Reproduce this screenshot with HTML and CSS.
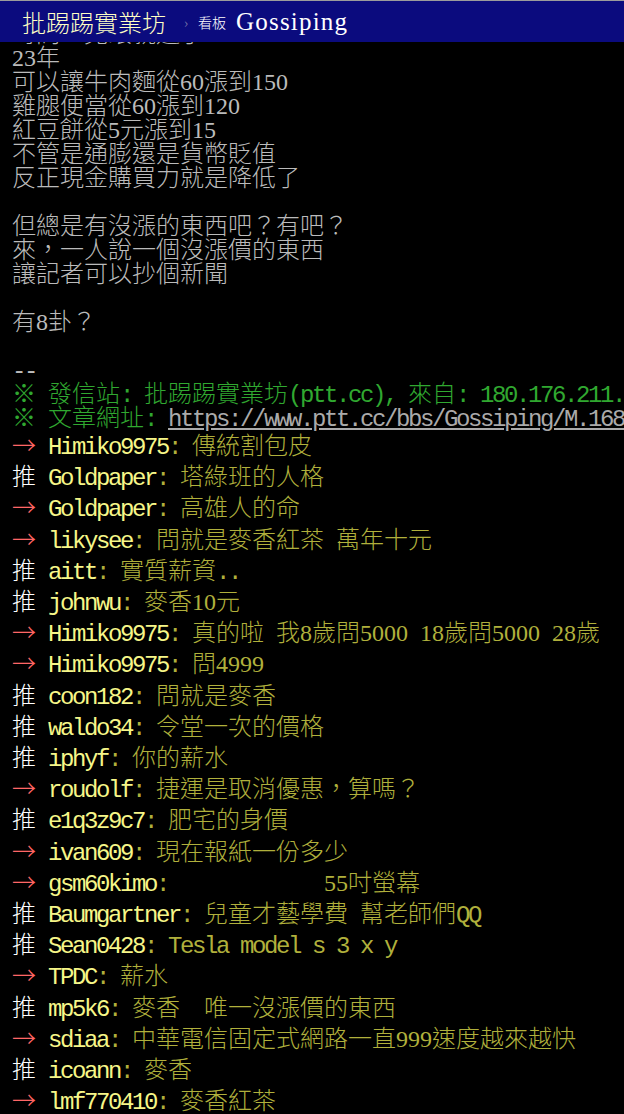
FILE: index.html
```html
<!DOCTYPE html>
<html lang="zh-Hant">
<head>
<meta charset="utf-8">
<title>批踢踢實業坊 › 看板 Gossiping</title>
<link rel="stylesheet" href="styles.css">
</head>
<body>
<div class="topbar">
  <span class="logo">批踢踢實業坊</span>
  <span class="sep">›</span>
  <span class="board-label">看板</span>
  <span class="board">Gossiping</span>
</div>
<div class="main">時間一晃眼就過了<span class="a"> </span><span class="n">20</span>
<span class="n">23</span>年
可以讓牛肉麵從<span class="n">60</span>漲到<span class="n">150</span>
雞腿便當從<span class="n">60</span>漲到<span class="n">120</span>
紅豆餅從<span class="n">5</span>元漲到<span class="n">15</span>
不管是通膨還是貨幣貶值
反正現金購買力就是降低了

但總是有沒漲的東西吧？有吧？
來，一人說一個沒漲價的東西
讓記者可以抄個新聞

有<span class="n">8</span>卦？

<span class="a">--</span>
<span class="f2">※<span class="a"> </span>發信站<span class="a">: </span>批踢踢實業坊<span class="a">(ptt.cc), </span>來自<span class="a">: 180.176.211.42 </span>(臺灣)</span>
<span class="f2">※<span class="a"> </span>文章網址<span class="a">: </span></span><span class="url a">https://www.ptt.cc/bbs/Gossiping/M.1680248871.A.5D3.html</span>
<div class="push"><span class="tag arrow">→</span><span class="uid a">Himiko9975</span><span class="txt"><span class="a">: </span>傳統割包皮</span></div><div class="push"><span class="tag up">推</span><span class="uid a">Goldpaper</span><span class="txt"><span class="a">: </span>塔綠班的人格</span></div><div class="push"><span class="tag arrow">→</span><span class="uid a">Goldpaper</span><span class="txt"><span class="a">: </span>高雄人的命</span></div><div class="push"><span class="tag arrow">→</span><span class="uid a">likysee</span><span class="txt"><span class="a">: </span>問就是麥香紅茶<span class="a"> </span>萬年十元</span></div><div class="push"><span class="tag up">推</span><span class="uid a">aitt</span><span class="txt"><span class="a">: </span>實質薪資<span class="a">..</span></span></div><div class="push"><span class="tag up">推</span><span class="uid a">johnwu</span><span class="txt"><span class="a">: </span>麥香<span class="n">10</span>元</span></div><div class="push"><span class="tag arrow">→</span><span class="uid a">Himiko9975</span><span class="txt"><span class="a">: </span>真的啦<span class="a"> </span>我<span class="n">8</span>歲問<span class="n">5000</span><span class="a"> </span><span class="n">18</span>歲問<span class="n">5000</span><span class="a"> </span><span class="n">28</span>歲</span></div><div class="push"><span class="tag arrow">→</span><span class="uid a">Himiko9975</span><span class="txt"><span class="a">: </span>問<span class="n">4999</span></span></div><div class="push"><span class="tag up">推</span><span class="uid a">coon182</span><span class="txt"><span class="a">: </span>問就是麥香</span></div><div class="push"><span class="tag up">推</span><span class="uid a">waldo34</span><span class="txt"><span class="a">: </span>令堂一次的價格</span></div><div class="push"><span class="tag up">推</span><span class="uid a">iphyf</span><span class="txt"><span class="a">: </span>你的薪水</span></div><div class="push"><span class="tag arrow">→</span><span class="uid a">roudolf</span><span class="txt"><span class="a">: </span>捷運是取消優惠，算嗎？</span></div><div class="push"><span class="tag up">推</span><span class="uid a">e1q3z9c7</span><span class="txt"><span class="a">: </span>肥宅的身價</span></div><div class="push"><span class="tag arrow">→</span><span class="uid a">ivan609</span><span class="txt"><span class="a">: </span>現在報紙一份多少</span></div><div class="push"><span class="tag arrow">→</span><span class="uid a">gsm60kimo</span><span class="txt"><span class="a">:             </span><span class="n">55</span>吋螢幕</span></div><div class="push"><span class="tag up">推</span><span class="uid a">Baumgartner</span><span class="txt"><span class="a">: </span>兒童才藝學費<span class="a"> </span>幫老師們<span class="a">QQ</span></span></div><div class="push"><span class="tag up">推</span><span class="uid a">Sean0428</span><span class="txt a">: Tesla model s 3 x y</span></div><div class="push"><span class="tag arrow">→</span><span class="uid a">TPDC</span><span class="txt"><span class="a">: </span>薪水</span></div><div class="push"><span class="tag up">推</span><span class="uid a">mp5k6</span><span class="txt"><span class="a">: </span>麥香<span class="a">  </span>唯一沒漲價的東西</span></div><div class="push"><span class="tag arrow">→</span><span class="uid a">sdiaa</span><span class="txt"><span class="a">: </span>中華電信固定式網路一直<span class="n">999</span>速度越來越快</span></div><div class="push"><span class="tag up">推</span><span class="uid a">icoann</span><span class="txt"><span class="a">: </span>麥香</span></div><div class="push"><span class="tag arrow">→</span><span class="uid a">lmf770410</span><span class="txt"><span class="a">: </span>麥香紅茶</span></div></div>
</body>
</html>
```
FILE: styles.css
```css
html, body {
  margin: 0;
  padding: 0;
  background: #000;
}
body {
  width: 624px;
  height: 1114px;
  overflow: hidden;
  font-family: "Noto Sans CJK TC", sans-serif;
  font-weight: 300;
  font-size: 24px;
  line-height: 24px;
  color: #bbbbbb;
}
.topbar {
  position: fixed;
  top: 0;
  left: 0;
  right: 0;
  height: 41px;
  border-top: 1px solid #9c9c9c;
  background: #0b0b7e;
  display: flex;
  align-items: center;
  padding-left: 22px;
  z-index: 2;
}
.logo {
  color: #ffffc4;
  font-size: 24px;
  line-height: 24px;
}
.sep {
  color: #8a8ab0;
  font-size: 14px;
  margin: 0 10px 0 18px;
}
.board-label {
  color: #ffffff;
  font-size: 14px;
  margin-right: 10px;
}
.board {
  color: #ffffff;
  font-family: "Liberation Serif", serif;
  font-weight: 400;
  font-size: 25px;
  letter-spacing: 1.2px;
}
.main {
  padding: 20px 0 0 12px;
  white-space: pre;
}
.a {
  font-family: "Liberation Mono", monospace;
  font-weight: 400;
  letter-spacing: -2.4px;
  line-height: 0;
}
.n {
  font-family: "Liberation Serif", serif;
  font-weight: 400;
  line-height: 0;
}
.f2 {
  color: #30a830;
}
.url {
  color: #aaaaaa;
  text-decoration: underline;
}
.push {
  line-height: 31.2px;
  white-space: pre;
}
.tag {
  display: inline-block;
  width: 36px;
}
.tag.up {
  color: #ffffff;
}
.tag.arrow {
  color: #ff6666;
}
.uid {
  color: #f6f688;
}
.txt {
  color: #b0b03c;
}
```
